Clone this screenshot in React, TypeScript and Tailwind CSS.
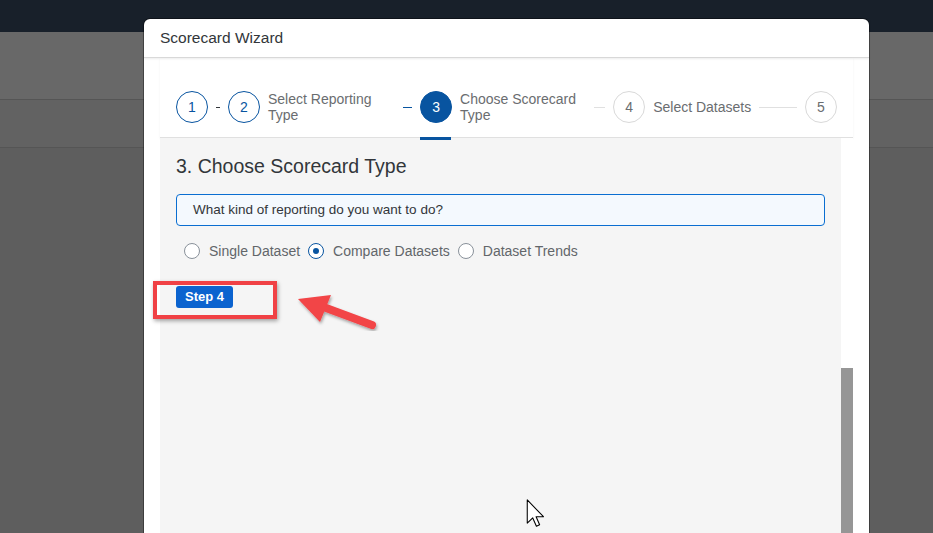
import React from "react"

type StepProps = {
  n: number
  state: "done" | "active" | "todo"
}

function StepCircle({ n, state }: StepProps) {
  const cls =
    state === "active"
      ? "bg-[#0854a0] text-white border-[#0854a0]"
      : state === "done"
        ? "bg-white text-[#0854a0] border-[#0854a0]"
        : "bg-white text-[#6a6d70] border-[#d9d9d9]"
  return (
    <div
      className={`flex h-8 w-8 shrink-0 items-center justify-center rounded-full border text-sm ${cls}`}
    >
      {n}
    </div>
  )
}

function Radio({ label, checked }: { label: string; checked?: boolean }) {
  return (
    <label className="flex items-center gap-[9px]">
      <span
        className={`flex h-4 w-4 items-center justify-center rounded-full border bg-white ${
          checked ? "border-[#0854a0]" : "border-[#89919a]"
        }`}
      >
        {checked && <span className="h-[6px] w-[6px] rounded-full bg-[#0854a0]" />}
      </span>
      <span className="whitespace-nowrap text-sm text-[#62666a]">{label}</span>
    </label>
  )
}

export default function App() {
  return (
    <div className="relative h-[533px] w-[933px] overflow-hidden bg-[#5e5e5e] font-['Liberation_Sans',Arial,sans-serif]">
      {/* dimmed page behind the dialog */}
      <div className="flex flex-col">
        <div className="h-8 bg-[#18202a]" />
        <div className="h-[68px] border-b border-[#555555] bg-[#686868]" />
        <div className="h-[48px] border-b border-[#555555] bg-[#626262]" />
      </div>

      {/* dialog */}
      <div className="absolute left-[144px] top-[19px] flex h-[530px] w-[725px] flex-col rounded-t-md bg-white shadow-[0_0_0_1px_rgba(0,0,0,0.35)]">
        <div className="flex h-[39px] shrink-0 items-center border-b border-[#d9d9d9] px-4 text-[15.5px] text-[#32363a] shadow-[0_1px_2px_rgba(0,0,0,0.08)]">
          Scorecard Wizard
        </div>

        <div className="flex flex-1 flex-col px-4">
          {/* steps */}
          <div className="flex h-[80px] shrink-0 items-center gap-2 border-b border-[#e0e0e0] px-4 pt-[19px] shadow-[0_1px_2px_rgba(0,0,0,0.06)]">
            <StepCircle n={1} state="done" />
            <div className="h-px w-1 bg-[#32363a]" />
            <StepCircle n={2} state="done" />
            <div className="w-[128px] text-sm leading-4 text-[#6a6d70]">
              Select Reporting Type
            </div>
            <div className="h-px w-[9px] bg-[#0854a0]" />
            <div className="relative">
              <StepCircle n={3} state="active" />
              <div className="absolute -bottom-[17px] left-0 h-[3px] w-[31px] bg-[#0854a0]" />
            </div>
            <div className="w-[127px] text-sm leading-4 text-[#6a6d70]">
              Choose Scorecard Type
            </div>
            <div className="h-px w-[11px] bg-[#e0e0e0]" />
            <StepCircle n={4} state="todo" />
            <div className="shrink-0 whitespace-nowrap text-sm text-[#6a6d70]">Select Datasets</div>
            <div className="h-px w-[38px] bg-[#e0e0e0]" />
            <StepCircle n={5} state="todo" />
          </div>

          {/* content */}
          <div className="flex flex-1">
            <div className="flex flex-1 flex-col items-start bg-[#f5f5f5] px-4 pt-4">
              <h2 className="text-[19.5px] leading-6 text-[#32363a]">3. Choose Scorecard Type</h2>
              <div className="mt-4 flex h-8 w-full items-center rounded border border-[#0a6ed1] bg-[#f4f9fe] px-4 text-[13.5px] text-[#32363a]">
                What kind of reporting do you want to do?
              </div>
              <div className="mt-[13px] flex h-6 items-center gap-2 pl-2">
                <Radio label="Single Dataset" />
                <Radio label="Compare Datasets" checked />
                <Radio label="Dataset Trends" />
              </div>
              <div className="mt-[23px] flex h-[22px] items-center rounded-[3px] bg-[#0b63cf] px-[9px] text-[13px] font-bold text-white">
                Step 4
              </div>
            </div>
            <div className="flex w-3 flex-col">
              <div className="h-[230px] bg-white" />
              <div className="flex-1 bg-[#969696]" />
            </div>
          </div>
        </div>
      </div>

      {/* annotation: red box */}
      <div className="absolute left-[153px] top-[281px] h-[38px] w-[124px] border-4 border-[#f04145] shadow-[1px_2px_4px_rgba(0,0,0,0.35)]" />

      {/* annotation: arrow */}
      <svg
        className="absolute left-[290px] top-[285px]"
        width="95"
        height="50"
        viewBox="290 285 95 50"
      >
        <defs>
          <filter id="sh" x="-20%" y="-20%" width="140%" height="140%">
            <feDropShadow dx="1" dy="2" stdDeviation="1.5" floodOpacity="0.35" />
          </filter>
        </defs>
        <g filter="url(#sh)">
          <line x1="372" y1="325" x2="318" y2="305" stroke="#f24447" strokeWidth="8" strokeLinecap="round" />
          <polygon points="298,299 331,295 320,322" fill="#f24447" />
        </g>
      </svg>

      {/* mouse cursor */}
      <svg className="absolute left-[526px] top-[499px]" width="19" height="29" viewBox="0 0 12 19">
        <path
          d="M0.6 0.6 L0.6 15.8 L4.2 12.4 L6.6 17.8 L8.7 16.9 L6.4 11.6 L11.2 11.6 Z"
          fill="white"
          stroke="black"
          strokeWidth="0.7"
          strokeLinejoin="round"
        />
      </svg>
    </div>
  )
}
